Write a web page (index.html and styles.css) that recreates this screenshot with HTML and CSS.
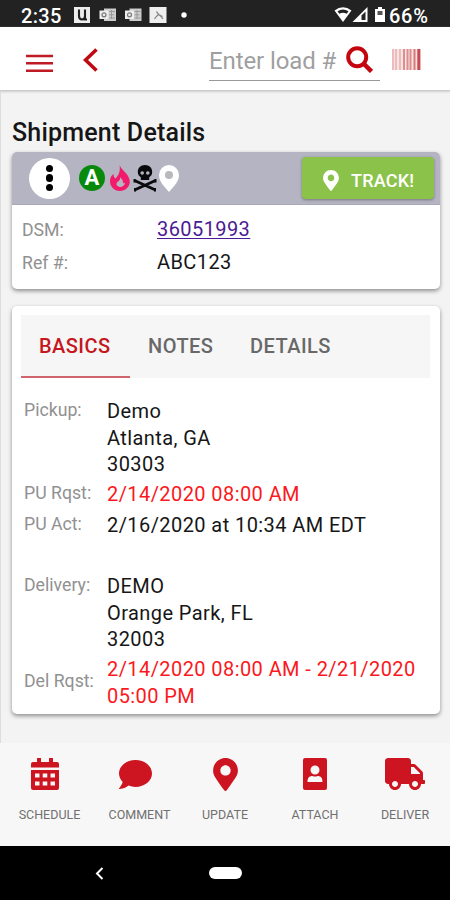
FILE: index.html
```html
<!DOCTYPE html>
<html lang="en">
<head>
<meta charset="utf-8">
<title>Shipment Details</title>
<link rel="stylesheet" href="styles.css">
</head>
<body>
<svg class="defs" aria-hidden="true">
  <symbol id="pin" viewBox="0 0 384 512"><path d="M172.268 501.67C26.97 291.031 0 269.413 0 192 0 85.961 85.961 0 192 0s192 85.961 192 192c0 77.413-26.97 99.031-172.268 309.67-9.535 13.774-29.93 13.773-39.464 0zM192 272c44.183 0 80-35.817 80-80s-35.817-80-80-80-80 35.817-80 80 35.817 80 80 80z"/></symbol>
</svg>
<div class="status">
  <span class="clock">2:35</span>
  <svg class="notices" viewBox="0 0 116 18" width="116" height="18">
    <rect x="0" y="1" width="16" height="16" fill="#eee"/>
    <path d="M5 3.500v6.500q0 3.500 3 3.500t3-3.500V3.500M11 9v4.500h2" fill="none" stroke="#222" stroke-width="2.100"/>
    <g id="mail"><path d="M30 2.500h12v12.500H30z" fill="#ccc"/><path d="M25.500 4.500h9v8.500h-9z" fill="#eee"/><circle cx="30" cy="8.800" r="2" fill="none" stroke="#777" stroke-width="1.200"/><path d="M35 5.500h6M35 8.800h5M35 12h6M37.500 4v9" stroke="#999" stroke-width="1"/></g>
    <use href="#mail" x="25.500"/>
    <rect x="75.500" y="1" width="17" height="16" fill="#eee"/>
    <path d="M80.500 13q2-3 3.500-4t5 4M82.500 5.500q2 4 6 5" fill="none" stroke="#888" stroke-width="1.200"/>
    <circle cx="110" cy="9" r="2.700" fill="#fff"/>
  </svg>
  <svg class="signals" viewBox="0 0 54 18" width="54" height="18">
    <path d="M0.500 4.500q8.500-6.500 17 0L9 16z" fill="#fff"/><path d="M3.500 5.200q5.500-3.500 11 0l-1.800 2.500q-3.700-2-7.400 0z" fill="#222"/>
    <path d="M33.500 1v15h-15z" fill="#fff"/><path d="M31.500 5.500v8.500h-4v-4.500z" fill="#222"/>
    <path d="M41 3h3V1h4v2h3v13H41z" fill="#fff"/><rect x="43.500" y="5" width="5" height="4" fill="#555"/>
  </svg>
  <span class="percent">66%</span>
</div>
<header class="topbar">
  <svg class="menu" viewBox="0 0 27 19" width="27" height="19"><path d="M0 2h27M0 9.200h27M0 16.700h27" stroke="#bf1b24" stroke-width="2.500"/></svg>
  <svg class="back" viewBox="0 0 15 24" width="15" height="24"><path d="M13.500 1.500L2.500 12l11 10.500" fill="none" stroke="#c00a12" stroke-width="3.600"/></svg>
  <div class="search">
    <span class="placeholder">Enter load #</span>
    <svg viewBox="0 0 27 27" width="27" height="27"><circle cx="11.200" cy="11.200" r="9" fill="none" stroke="#c4060f" stroke-width="4"/><path d="M17.500 17.500l8 8" stroke="#c4060f" stroke-width="4.500"/></svg>
  </div>
  <svg class="barcode" viewBox="0 0 29 21" width="29" height="21">
    <rect width="29" height="21" fill="#fae3e3"/>
    <path d="M1 0v21M4 0v21M8 0v21" stroke="#e6abad" stroke-width="1.400"/><path d="M12 0v21M15.500 0v21M18.500 0v21" stroke="#dc8d8f" stroke-width="2"/><path d="M22.500 0v21" stroke="#d6777a" stroke-width="2"/><path d="M26.800 0v21" stroke="#c84a50" stroke-width="3"/>
  </svg>
</header>
<main>
  <h1>Shipment Details</h1>
  <section class="card shipment">
    <div class="toolbar">
      <button class="more" aria-label="More"><i></i><i></i><i></i></button>
      <span class="badge">A</span>
      <svg class="flame" viewBox="0 0 20 26" width="20" height="26"><path d="M9.600 0C11.500 5.500 18 8 19.500 14.500C21 21 16 26 10 26C4 26 0 21.500 0 16C0 12.500 1.500 10.500 3.500 9C3.500 11 4 12.500 5.500 13.500C9 10 10.500 6 9.600 0Z" fill="#f21b6b"/><path d="M10 12.200q.5 3-2 4.300q-2.500 1.800-1 4q1.600 1.900 4.500 1.200q3.500-1 3.300-4.200q-.8.800-1.700.6q-.2-4-3.100-5.900z" fill="#b8b5c3"/></svg>
      <svg class="skull" viewBox="0 0 24 27" width="24" height="27"><path d="M12 0C7.500 0 4.800 3 4.800 7c0 2.500 1.300 4.200 3 5.200V15h8.400v-2.800c1.700-1 3-2.700 3-5.200C19.200 3 16.500 0 12 0zM9.200 6.200a1.800 1.800 0 1 1 0 3.600a1.800 1.800 0 0 1 0-3.600zm5.600 0a1.800 1.800 0 1 1 0 3.600a1.800 1.800 0 0 1 0-3.600z" fill="#0a0a0c" fill-rule="evenodd"/><path d="M1.500 15.500L22.500 25M22.500 15.500L1.500 25" stroke="#0a0a0c" stroke-width="2.900"/><path d="M1.500 14v3.500M22.500 14v3.500M2 23v3.500M22 23v3.500" stroke="#0a0a0c" stroke-width="2"/></svg>
      <svg class="place" viewBox="0 0 20 27" width="20" height="27"><path d="M10 0A10 10 0 0 0 0 10C0 16 4 20 10 27C16 20 20 16 20 10A10 10 0 0 0 10 0z" fill="#fff"/><circle cx="10" cy="10" r="4" fill="#b8b8bd"/></svg>
      <button class="track"><svg width="16" height="21"><use href="#pin"/></svg><span>TRACK!</span></button>
    </div>
    <dl class="ids">
      <dt>DSM:</dt><dd><a href="#">36051993</a></dd>
      <dt>Ref #:</dt><dd>ABC123</dd>
    </dl>
  </section>
  <section class="card info">
    <nav class="tabs"><span class="tab active">BASICS</span><span class="tab notes">NOTES</span><span class="tab details">DETAILS</span></nav>
    <dl class="facts">
      <dt>Pickup:</dt><dd>Demo<br>Atlanta, GA<br>30303</dd>
      <dt>PU Rqst:</dt><dd class="late">2/14/2020 08:00 AM</dd>
      <dt>PU Act:</dt><dd>2/16/2020 at 10:34 AM EDT</dd>
      <dt class="gap">Delivery:</dt><dd class="gap">DEMO<br>Orange Park, FL<br>32003</dd>
      <dt class="mid">Del Rqst:</dt><dd class="late">2/14/2020 08:00 AM - 2/21/2020<br>05:00 PM</dd>
    </dl>
  </section>
</main>
<nav class="actions">
  <div class="action schedule"><svg viewBox="0 0 28 32" width="28" height="32"><path fill-rule="evenodd" d="M6 0h4v4h8V0h4v4h4q2 0 2 2v3.500H0V6q0-2 2-2h4zM0 12h28v18q0 2-2 2H2q-2 0-2-2zM4 15.500v4h4.500v-4zm7.700 0v4h4.600v-4zm7.800 0v4H24v-4zM4 23.500v4h4.500v-4zm7.700 0v4h4.600v-4zm7.800 0v4H24v-4z"/></svg><span>SCHEDULE</span></div>
  <div class="action comment"><svg viewBox="0 32 512 448" width="33" height="29"><path d="M256 32C114.600 32 0 125.100 0 240c0 49.600 21.400 95 57 130.700C44.500 421.100 2.700 466 2.200 466.500c-2.200 2.300-2.800 5.700-1.500 8.700S4.800 480 8 480c66.300 0 116-31.800 140.600-51.400 32.700 12.300 69 19.400 107.400 19.400 141.400 0 256-93.100 256-208S397.400 32 256 32z"/></svg><span>COMMENT</span></div>
  <div class="action"><svg width="25" height="33"><use href="#pin"/></svg><span>UPDATE</span></div>
  <div class="action"><svg viewBox="0 0 24 32" width="24" height="32"><path fill-rule="evenodd" d="M2 0h20q2 0 2 2v28q0 2-2 2H2q-2 0-2-2V2q0-2 2-2zM12 7.500a4.500 4.500 0 1 0 0 9a4.500 4.500 0 0 0 0-9zM9.500 18C6 18 4.500 20 4.500 24h15c0-4-1.500-6-5-6q-2.500 1-5 0z"/></svg><span>ATTACH</span></div>
  <div class="action"><svg viewBox="0 0 640 512" width="40" height="32"><path d="M624 352h-16V243.900c0-12.700-5.100-24.900-14.100-33.900L494 110.100c-9-9-21.200-14.100-33.900-14.100H416V48c0-26.500-21.500-48-48-48H48C21.500 0 0 21.500 0 48v320c0 26.500 21.500 48 48 48h16c0 53 43 96 96 96s96-43 96-96h128c0 53 43 96 96 96s96-43 96-96h48c8.800 0 16-7.200 16-16v-32c0-8.800-7.200-16-16-16zM160 464c-26.500 0-48-21.500-48-48s21.500-48 48-48 48 21.500 48 48-21.500 48-48 48zm320 0c-26.500 0-48-21.500-48-48s21.500-48 48-48 48 21.500 48 48-21.500 48-48 48zm80-208H416V144h44.100l99.900 99.900V256z"/></svg><span>DELIVER</span></div>
</nav>
<div class="system">
  <svg viewBox="0 0 9 13" width="9" height="13"><path d="M7.500 1L2 6.500l5.500 5.500" fill="none" stroke="#fff" stroke-width="2"/></svg>
  <span class="home"></span>
</div>
</body>
</html>
```
FILE: styles.css
```css
* { box-sizing: border-box; }
body { margin: 0; width: 450px; height: 900px; display: flex; flex-direction: column; overflow: hidden; background: #f3f3f3; font-family: Roboto, sans-serif; color: #161616; }
h1, dl, dd { margin: 0; }
button { border: 0; padding: 0; font: inherit; }
svg { display: block; flex: none; }
.defs { display: none; }
.status { flex: none; height: 27px; background: #222; display: flex; align-items: center; padding: 2px 0 0 21px; color: #fff; font-size: 20px; font-weight: 500; }
.clock { width: 53px; letter-spacing: .3px; padding-top: 2px; }
.signals { margin-left: 144px; }
.percent { margin-left: 1px; letter-spacing: .7px; padding-top: 2px; }
.topbar { flex: none; height: 64px; background: #fff; border-bottom: 1px solid #ccc; box-shadow: 0 1px 2px #ccc; display: flex; align-items: flex-start; padding-left: 26px; }
.menu { margin-top: 27px; }
.back { margin: 21px 0 0 30px; }
.search { width: 171px; height: 54px; margin-left: 111px; border-bottom: 1px solid #999; display: flex; align-items: flex-start; justify-content: space-between; padding: 19px 7px 0 0; }
.placeholder { color: #9f9f9f; font-size: 24px; line-height: 31px; white-space: nowrap; letter-spacing: -.1px; }
.barcode { margin: 22px 0 0 12px; }
main { flex: none; height: 652px; padding: 25px 10px 0 11px; border-left: 1px solid #ddd; }
h1 { font-size: 25px; font-weight: 500; line-height: 34px; letter-spacing: .2px; height: 36px; }
.card { background: #fff; border-radius: 5px; box-shadow: 0 2px 4px rgba(0,0,0,.42); overflow: hidden; }
.shipment { height: 137px; }
.toolbar { height: 53px; background: #b5b4c2; border-bottom: 1px solid #aaa8b6; display: flex; align-items: center; padding: 0 6px 0 17px; }
.more { width: 41px; height: 41px; border-radius: 50%; background: #fff; display: flex; flex-direction: column; align-items: center; justify-content: center; gap: 2px; }
.more i { width: 7.500px; height: 7.500px; border-radius: 50%; background: #000; }
.badge { width: 26px; height: 26px; margin-left: 9px; border-radius: 50%; background: #078a0b; color: #fff; font-size: 22px; line-height: 26px; font-weight: 700; text-align: center; }
.flame { margin-left: 5px; }
.skull { margin-left: 3px; }
.place { margin-left: 2px; }
.track { width: 132px; height: 42px; margin-left: auto; background: #8bc34a; border-radius: 4px; box-shadow: 0 1px 3px rgba(0,0,0,.35); color: #fff; fill: #fff; display: flex; align-items: center; padding: 5px 0 0 21px; gap: 12px; font-size: 18px; font-weight: 500; letter-spacing: .2px; }
.ids { display: grid; grid-template-columns: 135px auto; grid-auto-rows: 33px; align-items: center; padding: 8px 10px; }
dt { color: #919191; font-size: 17.700px; font-weight: 400; white-space: nowrap; }
dd { font-size: 20px; letter-spacing: .42px; line-height: 26.700px; white-space: nowrap; }
.ids dt { padding-top: 0; }
a { color: #4b1a94; text-decoration-thickness: 1px; text-underline-offset: 2px; }
.info { height: 408px; margin-top: 17px; padding: 9px 10px 9px 9px; }
.tabs { height: 63px; background: #f6f6f6; display: flex; font-size: 20px; font-weight: 500; line-height: 63px; letter-spacing: .45px; color: #686868; }
.tab.active { width: 109px; padding-left: 18px; color: #c41720; border-bottom: 2px solid #d2656b; }
.notes { width: 102px; padding-left: 18px; }
.details { padding-left: 18px; }
.facts { display: grid; grid-template-columns: 83px auto; padding: 20px 0 0 3px; grid-template-rows: 83px 31px 30px 114px 53px; }
.facts dt { line-height: 24px; }
.gap { margin-top: 31px; }
.mid { padding-top: 13px; }
.late { color: #fb1820; }
.actions { flex: none; height: 103px; background: #f7f7f7; display: grid; grid-template-columns: repeat(5, 90px); fill: #cc1520; }
.action { display: flex; flex-direction: column; align-items: center; justify-content: space-between; padding: 15px 0 22px; color: #707070; font-size: 12.500px; line-height: 18px; }
.comment { padding-top: 17px; }
.schedule span, .comment span { margin-left: 9px; }
.system { flex: 1; background: #000; display: flex; align-items: center; padding-left: 95px; }
.home { width: 33px; height: 12px; border-radius: 6px; background: #fff; margin-left: 105px; }
```
